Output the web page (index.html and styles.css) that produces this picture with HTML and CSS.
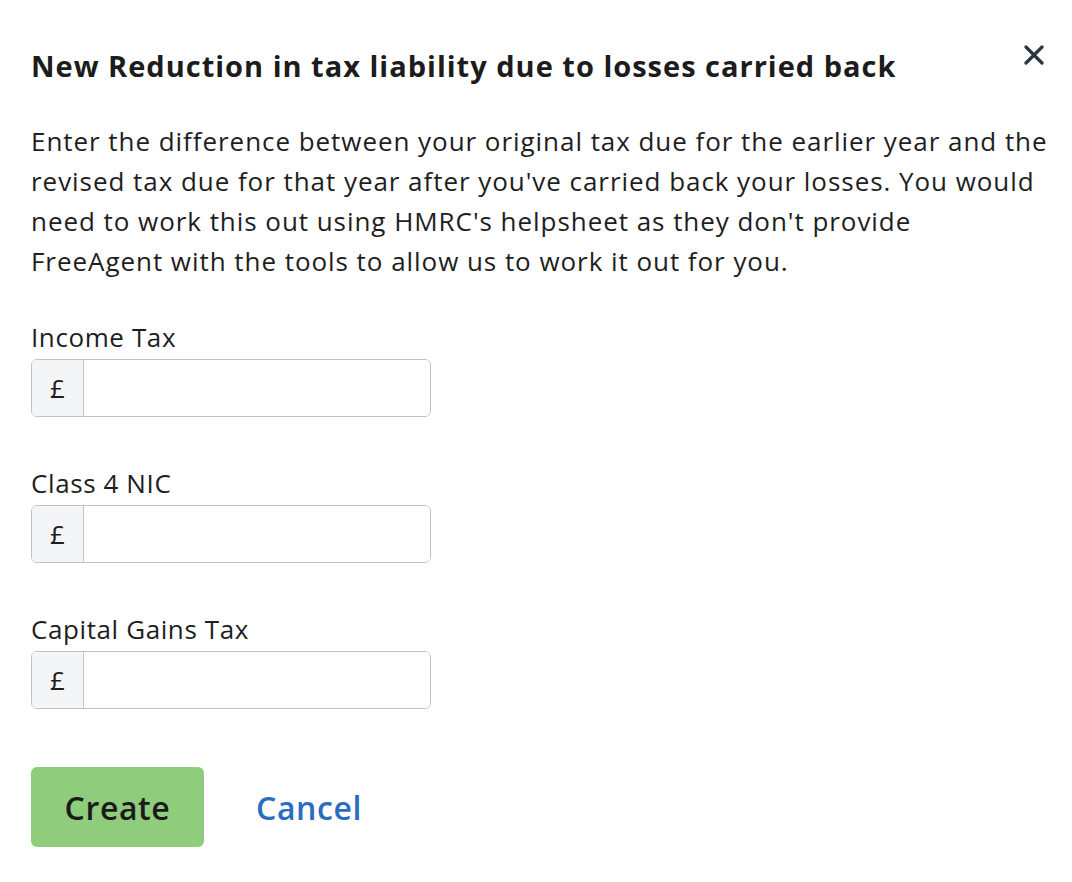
FILE: index.html
```html
<!DOCTYPE html>
<html>
<head>
<meta charset="utf-8">
<link rel="stylesheet" href="styles.css">
</head>
<body>
<div class="modal">
  <div class="header">
    <h1 class="title">New Reduction in tax liability due to losses carried back</h1>
    <button class="close" aria-label="Close">
      <svg width="20" height="20" viewBox="0 0 20 20"><path d="M2 2 L18 18 M18 2 L2 18" stroke="#2b3640" stroke-width="3.2" stroke-linecap="round"/></svg>
    </button>
  </div>
  <p class="intro">Enter the difference between your original tax due for the earlier year and the revised tax due for that year after you've carried back your losses. You would need to work this out using HMRC's helpsheet as they don't provide <span class="nowrap">FreeAgent with</span> the tools to allow us to work it out for you.</p>
  <div class="fields">
    <div class="field">
      <label class="label">Income Tax</label>
      <div class="input-group"><span class="prefix">£</span><input class="input" type="text"></div>
    </div>
    <div class="field">
      <label class="label">Class 4 NIC</label>
      <div class="input-group"><span class="prefix">£</span><input class="input" type="text"></div>
    </div>
    <div class="field">
      <label class="label">Capital Gains Tax</label>
      <div class="input-group"><span class="prefix">£</span><input class="input" type="text"></div>
    </div>
  </div>
  <div class="actions">
    <button class="btn-create">Create</button>
    <a class="cancel" href="#">Cancel</a>
  </div>
</div>
</body>
</html>
```
FILE: styles.css
```css
html, body {
  margin: 0;
  padding: 0;
  background: #ffffff;
}
body {
  font-family: "Open Sans", "Noto Sans", sans-serif;
  color: #1e1e1e;
}
.modal {
  padding: 40px 20px 0 31px;
}
.header {
  display: flex;
  justify-content: space-between;
  align-items: flex-start;
}
.title {
  margin: 8px 0 0 0;
  font-size: 29px;
  font-weight: 700;
  line-height: 36px;
  letter-spacing: 1px;
  color: #1c1c1c;
}
.close {
  border: 0;
  background: none;
  padding: 0;
  margin: 5px 8px 0 0;
  width: 20px;
  height: 20px;
  cursor: pointer;
}
.close svg { display: block; }
.intro {
  margin: 37px 0 0 0;
  font-size: 26px;
  line-height: 40px;
  letter-spacing: 0.95px;
  color: #1e1e1e;
}
.nowrap {
  white-space: nowrap;
}
.fields {
  display: flex;
  flex-direction: column;
  gap: 51px;
  margin-top: 41px;
}
.label {
  display: block;
  font-size: 26px;
  line-height: 30px;
  letter-spacing: 0.6px;
  margin-bottom: 7px;
}
.input-group {
  display: flex;
  width: 398px;
  height: 56px;
  border: 1px solid #bfc4cb;
  border-radius: 6px;
  overflow: hidden;
}
.prefix {
  width: 51px;
  flex: none;
  background: #f4f5f7;
  border-right: 1px solid #bfc4cb;
  display: flex;
  align-items: center;
  justify-content: center;
  font-size: 26px;
  color: #1e1e1e;
}
.input {
  flex: 1;
  border: 0;
  outline: none;
  font-size: 24px;
  padding: 0 12px;
  background: #fff;
}
.actions {
  display: flex;
  align-items: center;
  gap: 52px;
  margin-top: 58px;
}
.btn-create {
  width: 173px;
  height: 80px;
  border: 0;
  border-radius: 6px;
  background: #8fcc7b;
  font-family: "Open Sans", "Noto Sans", sans-serif;
  font-size: 32px;
  font-weight: 600;
  letter-spacing: 0.6px;
  color: #1a1a1a;
  cursor: pointer;
}
.cancel {
  font-size: 32px;
  font-weight: 600;
  letter-spacing: 0.6px;
  color: #2b6cc0;
  text-decoration: none;
}
```
